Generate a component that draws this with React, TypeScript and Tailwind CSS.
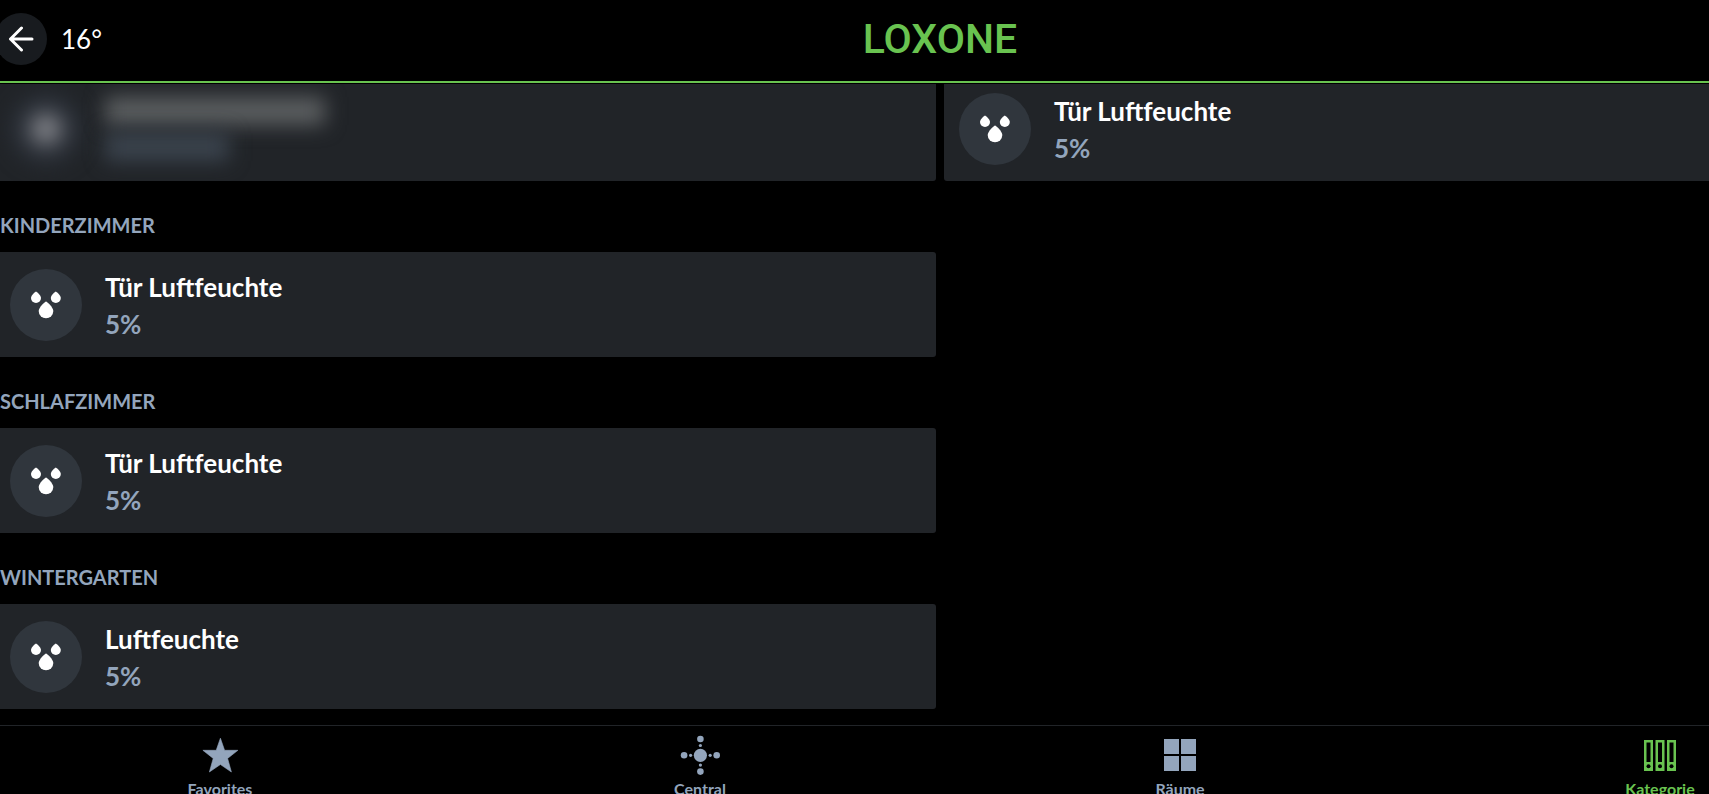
import React from 'react';

interface Sensor {
  name: string;
  value: string;
}

interface Room {
  title: string;
  sensor: Sensor;
}

interface Tab {
  label: string;
  icon: React.ReactNode;
  active?: boolean;
}

const rooms: Room[] = [
  { title: 'Kinderzimmer', sensor: { name: 'Tür Luftfeuchte', value: '5%' } },
  { title: 'Schlafzimmer', sensor: { name: 'Tür Luftfeuchte', value: '5%' } },
  { title: 'Wintergarten', sensor: { name: 'Luftfeuchte', value: '5%' } },
];

const BackIcon = () => (
  <svg width="26" height="26" viewBox="0 0 26 26" fill="none" stroke="currentColor" strokeWidth="3" strokeLinecap="round" strokeLinejoin="round" aria-hidden="true">
    <path d="M24 13H2.5M13.500 2 2.500 13l11 11" />
  </svg>
);

const DropsIcon = () => (
  <svg width="30" height="28" viewBox="0 0 30 28" fill="#fff" aria-hidden="true">
    <path d="M5 .5C5.500 .5 10 4.300 10 7a5 5 0 0 1-10 0C0 4.300 4.500 .5 5 .5Z" />
    <path d="M24.800 .5C25.300 .5 29.800 4.300 29.800 7a5 5 0 0 1-10 0C19.800 4.300 24.300 .5 24.800 .5Z" />
    <path d="M15 10.500C15.800 10.500 22.300 16.200 22.300 20a7.300 7.300 0 0 1-14.600 0C7.700 16.200 14.300 10.500 15 10.500Z" />
  </svg>
);

const StarIcon = () => (
  <svg width="40" height="40" viewBox="0 0 40 40" fill="currentColor" aria-hidden="true">
    <path d="M20.400 3.200 24.600 15.300H37.900L27.600 23.400 31.400 37 20.400 29.500 9.400 37 13.200 23.400 2.900 15.300H16.200Z" stroke="currentColor" strokeWidth=".6" strokeLinejoin="round" />
  </svg>
);

const CentralIcon = () => (
  <svg width="40" height="40" viewBox="0 0 40 40" fill="currentColor" aria-hidden="true">
    <circle cx="20.400" cy="20.300" r="6.600" />
    <circle cx="20.400" cy="4" r="3.300" />
    <circle cx="20.400" cy="36.600" r="3.300" />
    <circle cx="4.100" cy="20.300" r="3.300" />
    <circle cx="36.700" cy="20.300" r="3.300" />
    <circle cx="20.400" cy="10.500" r="1.600" />
    <circle cx="20.400" cy="30.100" r="1.600" />
    <circle cx="10.600" cy="20.300" r="1.600" />
    <circle cx="30.200" cy="20.300" r="1.600" />
  </svg>
);

const RoomsIcon = () => (
  <svg width="40" height="40" viewBox="0 0 40 40" fill="currentColor" aria-hidden="true">
    <path d="M4 4h15v15H4zM21 4h15v15H21zM4 21h15v15H4zM21 21h15v15H21z" />
  </svg>
);

const CategoryIcon = () => (
  <svg width="40" height="40" viewBox="0 0 40 40" aria-hidden="true">
    {[4, 15.500, 27].map(x => (
      <g key={x}>
        <rect x={x + 1.25} y="6.250" width="6.500" height="28.500" fill="none" stroke="currentColor" strokeWidth="2.500" />
        <rect x={x + 1} y="27" width="7" height="8" fill="currentColor" />
        <circle cx={x + 4.5} cy="31.300" r="2" fill="#000" />
      </g>
    ))}
  </svg>
);

const tabs: Tab[] = [
  { label: 'Favorites', icon: <StarIcon /> },
  { label: 'Central', icon: <CentralIcon /> },
  { label: 'Räume', icon: <RoomsIcon /> },
  { label: 'Kategorie', icon: <CategoryIcon />, active: true },
];

const SensorCard: React.FC<{ sensor: Sensor }> = ({ sensor }) => (
  <button type="button" className="flex h-[105px] w-full items-center gap-[23px] rounded-[3px] bg-[#212428] pl-[15px] text-left">
    <span className="flex size-[72px] shrink-0 items-center justify-center rounded-full bg-[#30363d]">
      <DropsIcon />
    </span>
    <span className="flex flex-col pt-[2px] text-[26px] leading-[37px] font-bold">
      <span className="text-white">{sensor.name}</span>
      <span className="text-[#93a5bc]">{sensor.value}</span>
    </span>
  </button>
);

const HiddenCard = () => (
  <div className="flex h-[105px] items-center gap-[23px] overflow-hidden rounded-[3px] bg-[#212428] pl-[15px]" aria-hidden="true">
    <div className="flex size-[72px] shrink-0 items-center justify-center rounded-full bg-[#2b3038] blur-[10px]">
      <div className="size-8 rounded-full bg-[#7c7e84]" />
    </div>
    <div className="flex flex-col gap-2">
      <div className="h-7 w-[220px] bg-[#5c5f61] blur-[10px]" />
      <div className="h-7 w-[124px] bg-[#3b444e] blur-[10px]" />
    </div>
  </div>
);

const App: React.FC = () => (
  <div className="h-screen overflow-hidden bg-black font-['Lato','Open_Sans',sans-serif]">
    {/* The layout is wider than the window and runs out of it on both sides */}
    <div className="-ml-5 flex h-full w-[calc(100%+211px)] flex-col">
      <header className="grid h-[83px] shrink-0 grid-cols-3 items-center border-b-2 border-[#69c350] px-[15px] pb-[3px]">
        <div className="flex items-center gap-[14px] text-white">
          <button type="button" aria-label="Back" className="flex size-[52px] items-center justify-center rounded-full bg-[#181b1f]">
            <BackIcon />
          </button>
          <span className="text-[26px] leading-9">16°</span>
        </div>
        <div className="text-center font-['Roboto',sans-serif] text-[41px] leading-[52px] font-medium text-[#69c350]">
          LOXONE
        </div>
      </header>

      <main className="flex min-h-0 flex-1 flex-col justify-end overflow-hidden border-t border-black px-[15px] pb-4">
        <div className="grid shrink-0 grid-cols-2 gap-2">
          <HiddenCard />
          <SensorCard sensor={{ name: 'Tür Luftfeuchte', value: '5%' }} />
        </div>
        {rooms.map(room => (
          <section key={room.title} className="shrink-0">
            <h2 className="pt-[30px] pb-[13px] pl-[5px] text-xl leading-7 font-bold text-[#93a5bc] uppercase">{room.title}</h2>
            <div className="grid grid-cols-2 gap-2">
              <SensorCard sensor={room.sensor} />
            </div>
          </section>
        ))}
      </main>

      <nav className="grid h-[69px] shrink-0 grid-cols-4 overflow-hidden border-t border-[#212428]">
        {tabs.map(tab => (
          <button
            key={tab.label}
            type="button"
            className={`flex flex-col items-center gap-[2px] pt-[9px] text-base leading-6 font-bold ${tab.active ? 'text-[#69c350]' : 'text-[#93a5bc]'}`}
          >
            <span className="h-10">{tab.icon}</span>
            <span>{tab.label}</span>
          </button>
        ))}
      </nav>
    </div>
  </div>
);

export default App;
